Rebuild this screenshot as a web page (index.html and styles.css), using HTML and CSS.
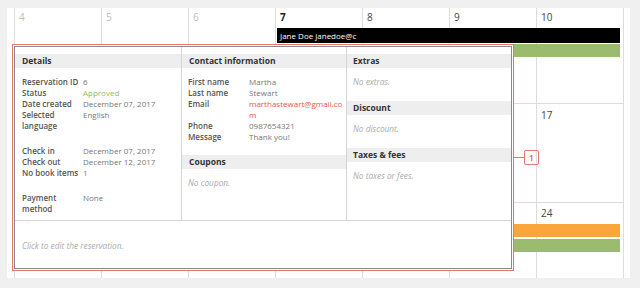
FILE: index.html
```html
<!DOCTYPE html>
<html>
<head>
<meta charset="utf-8">
<link rel="stylesheet" href="styles.css">
</head>
<body>
<div class="card">
  <div class="week w1">
    <div class="day muted"><span class="num">4</span></div>
    <div class="day muted"><span class="num">5</span></div>
    <div class="day muted"><span class="num">6</span></div>
    <div class="day today"><span class="num">7</span></div>
    <div class="day"><span class="num">8</span></div>
    <div class="day"><span class="num">9</span></div>
    <div class="day"><span class="num">10</span></div>
    <div class="event ev-black">Jane Doe janedoe@c</div>
    <div class="event ev-green"></div>
  </div>
  <div class="week w2">
    <div class="day"><span class="num">11</span></div>
    <div class="day"><span class="num">12</span></div>
    <div class="day"><span class="num">13</span></div>
    <div class="day"><span class="num">14</span></div>
    <div class="day"><span class="num">15</span></div>
    <div class="day"><span class="num">16</span></div>
    <div class="day"><span class="num">17</span></div>
  </div>
  <div class="week w3">
    <div class="day"><span class="num">18</span></div>
    <div class="day"><span class="num">19</span></div>
    <div class="day"><span class="num">20</span></div>
    <div class="day"><span class="num">21</span></div>
    <div class="day"><span class="num">22</span></div>
    <div class="day"><span class="num">23</span></div>
    <div class="day"><span class="num">24</span></div>
    <div class="event ev-orange"></div>
    <div class="event ev-green2"></div>
  </div>
</div>

<div class="popup">
  <div class="popup-box">
    <div class="cols">
      <div class="col">
        <div class="band">Details</div>
        <div class="kv">
          <div class="k">Reservation ID</div><div class="v">6</div>
          <div class="k">Status</div><div class="v ok">Approved</div>
          <div class="k">Date created</div><div class="v">December 07, 2017</div>
          <div class="k">Selected language</div><div class="v">English</div>
        </div>
        <div class="kv gap">
          <div class="k">Check in</div><div class="v">December 07, 2017</div>
          <div class="k">Check out</div><div class="v">December 12, 2017</div>
          <div class="k">No book items</div><div class="v">1</div>
        </div>
        <div class="kv gap">
          <div class="k">Payment method</div><div class="v">None</div>
        </div>
      </div>
      <div class="col">
        <div class="band">Contact information</div>
        <div class="kv">
          <div class="k">First name</div><div class="v">Martha</div>
          <div class="k">Last name</div><div class="v">Stewart</div>
          <div class="k">Email</div><div class="v mail">marthastewart@gmail.com</div>
          <div class="k">Phone</div><div class="v">0987654321</div>
          <div class="k">Message</div><div class="v">Thank you!</div>
        </div>
        <div class="band band-next">Coupons</div>
        <div class="empty">No coupon.</div>
      </div>
      <div class="col">
        <div class="band">Extras</div>
        <div class="empty">No extras.</div>
        <div class="band">Discount</div>
        <div class="empty">No discount.</div>
        <div class="band">Taxes &amp; fees</div>
        <div class="empty">No taxes or fees.</div>
      </div>
    </div>
    <div class="foot">Click to edit the reservation.</div>
  </div>
</div>
<div class="connector"></div>
<div class="badge">1</div>
</body>
</html>
```

FILE: styles.css
```css
html, body {
  margin: 0;
  padding: 0;
}
body {
  background: #f0f0f0;
  font-family: "Open Sans", "DejaVu Sans", sans-serif;
  width: 640px;
  height: 288px;
  overflow: hidden;
  position: relative;
}
.card {
  margin: 8px 10px 0 7px;
  height: 270px;
  background: #fff;
  padding: 0 6px 0 7px;
  overflow: hidden;
}
.week {
  display: grid;
  grid-template-columns: repeat(7, 87px);
  width: 609px;
  border-right: 1px solid #dcdcdc;
  border-bottom: 1px solid #dcdcdc;
}
.w1 {
  height: 95px;
  grid-template-rows: 20px 15px 1px 13px 1fr;
}
.w2 {
  height: 98px;
  grid-template-rows: 1fr;
}
.w3 {
  height: 100px;
  grid-template-rows: 21px 13px 2px 13px 1fr;
}
.day {
  grid-row: 1 / -1;
  border-left: 1px solid #dcdcdc;
}
.day:nth-child(1) { grid-column: 1; }
.day:nth-child(2) { grid-column: 2; }
.day:nth-child(3) { grid-column: 3; }
.day:nth-child(4) { grid-column: 4; }
.day:nth-child(5) { grid-column: 5; }
.day:nth-child(6) { grid-column: 6; }
.day:nth-child(7) { grid-column: 7; }
.num {
  display: block;
  font-size: 10px;
  line-height: 12px;
  color: #444;
  padding: 3px 0 0 4px;
}
.w2 .num { padding-top: 5px; }
.w3 .num { padding-top: 4px; }
.muted .num { color: #bbb; }
.today .num { color: #222; font-weight: 700; }
.event {
  grid-column: 4 / 8;
  margin: 0 3px 0 2px;
}
.ev-black {
  grid-row: 2;
  background: #000;
  color: #fff;
  font-size: 8px;
  line-height: 15px;
  padding-left: 3px;
  white-space: nowrap;
  overflow: hidden;
}
.ev-green {
  grid-row: 4;
  background: #9bbb6e;
}
.ev-orange {
  grid-column: 1 / 8;
  grid-row: 2;
  background: #faa63a;
}
.ev-green2 {
  grid-column: 1 / 8;
  grid-row: 4;
  background: #9bbb6e;
}

.popup {
  position: absolute;
  left: 12px;
  top: 44px;
  width: 502px;
  height: 227px;
  box-sizing: border-box;
  border: 1px solid #e8766e;
  padding: 1px;
  background: #fff;
}
.popup-box {
  height: 100%;
  box-sizing: border-box;
  border: 1px solid #8a8a8a;
  display: flex;
  flex-direction: column;
}
.cols {
  display: grid;
  grid-template-columns: 166px 165px 165px;
  height: 174px;
  box-sizing: border-box;
  border-bottom: 1px solid #d4d4d4;
}
.col {
  padding-top: 7px;
  box-sizing: border-box;
}
.col + .col {
  border-left: 1px solid #d4d4d4;
}
.band {
  background: #eeeeee;
  height: 14px;
  line-height: 14px;
  font-size: 8.5px;
  font-weight: 700;
  color: #333;
  padding-left: 7px;
}
.col:nth-child(3) .band { padding-left: 6px; }
.kv {
  display: grid;
  grid-template-columns: 61px 1fr;
  padding: 8px 7px 0 7px;
  font-size: 8px;
  line-height: 11px;
}
.col:nth-child(2) .kv { padding-left: 6px; padding-right: 2px; }
.kv.gap { padding-top: 14px; }
.k {
  font-weight: 600;
  color: #555;
}
.v {
  color: #777;
}
.v.ok { color: #8fba5c; }
.v.mail {
  color: #e8574b;
  word-break: break-all;
}
.band-next { margin-top: 13px; }
.empty {
  font-size: 8.3px;
  line-height: 11px;
  font-style: italic;
  color: #aaa;
  padding: 8px 7px 14px 6px;
}
.foot {
  flex: 1;
  font-size: 8.3px;
  line-height: 11px;
  font-style: italic;
  color: #aaa;
  padding: 19px 7px 0 7px;
}
.connector {
  position: absolute;
  left: 513px;
  top: 157px;
  width: 11px;
  height: 1px;
  background: #e8766e;
}
.badge {
  position: absolute;
  left: 524px;
  top: 150px;
  width: 15px;
  height: 15px;
  box-sizing: border-box;
  border: 1px solid #e8766e;
  border-radius: 2px;
  color: #e8574b;
  font-size: 8.5px;
  font-weight: 600;
  line-height: 13px;
  text-align: center;
}
```
